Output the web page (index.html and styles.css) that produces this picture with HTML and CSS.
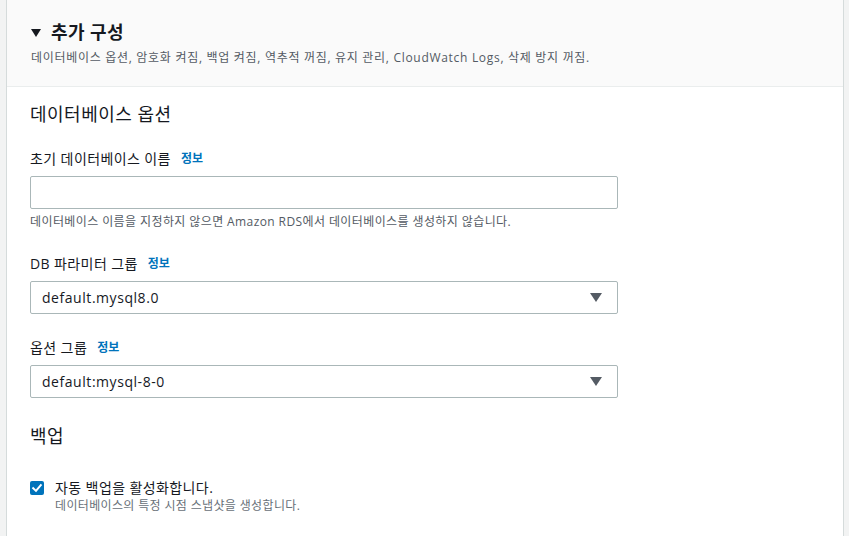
FILE: index.html
```html
<!DOCTYPE html>
<html lang="ko">
<head>
<meta charset="utf-8">
<link rel="stylesheet" href="styles.css">
</head>
<body>
<div class="panel">
  <div class="header">
    <div class="title-row">
      <span class="caret"></span>
      <h2 class="title">추가 구성</h2>
    </div>
    <p class="summary">데이터베이스 옵션, 암호화 켜짐, 백업 켜짐, 역추적 꺼짐, 유지 관리, CloudWatch Logs, 삭제 방지 꺼짐.</p>
  </div>
  <div class="body">
    <h3 class="section-title">데이터베이스 옵션</h3>

    <div class="field first">
      <div class="label">초기 데이터베이스 이름<a class="info">정보</a></div>
      <div class="input"></div>
      <div class="hint">데이터베이스 이름을 지정하지 않으면 Amazon RDS에서 데이터베이스를 생성하지 않습니다.</div>
    </div>

    <div class="field">
      <div class="label">DB 파라미터 그룹<a class="info">정보</a></div>
      <div class="input select"><span>default.mysql8.0</span><span class="arrow"></span></div>
    </div>

    <div class="field">
      <div class="label">옵션 그룹<a class="info">정보</a></div>
      <div class="input select"><span>default:mysql-8-0</span><span class="arrow"></span></div>
    </div>

    <h3 class="section-title backup">백업</h3>

    <div class="check-row">
      <span class="checkbox">
        <svg width="14" height="14" viewBox="0 0 14 14"><path d="M3.2 7.2 L6 9.9 L10.8 4.2" fill="none" stroke="#fff" stroke-width="2" stroke-linecap="square"/></svg>
      </span>
      <div class="check-text">
        <div class="check-label">자동 백업을 활성화합니다.</div>
        <div class="check-desc">데이터베이스의 특정 시점 스냅샷을 생성합니다.</div>
      </div>
    </div>
  </div>
</div>
</body>
</html>
```

FILE: styles.css
```css
* { box-sizing: border-box; }
html, body {
  margin: 0;
  padding: 0;
}
body {
  background: #f2f3f3;
  font-family: "Open Sans", "Noto Sans CJK KR", sans-serif;
  color: #16191f;
  height: 536px;
  overflow: hidden;
}
.panel {
  margin-left: 6px;
  width: 838px;
  height: 560px;
  background: #fff;
  border-left: 1px solid #d5dbdb;
  border-right: 1px solid #d5dbdb;
}
.header {
  background: #fafafa;
  border-bottom: 1px solid #eaeded;
  padding: 20px 23px 0 23px;
  height: 87px;
}
.title-row {
  display: flex;
  align-items: center;
  height: 24px;
}
.caret {
  width: 0;
  height: 0;
  border-left: 5px solid transparent;
  border-right: 5px solid transparent;
  border-top: 8px solid #16191f;
  margin-left: 1px;
  margin-right: 10px;
  margin-top: 1px;
}
.title {
  margin: 0;
  font-size: 18px;
  font-weight: 700;
  line-height: 24px;
  letter-spacing: 0.4px;
}
.summary {
  margin: 5px 0 0 0;
  padding-left: 1px;
  font-size: 12px;
  line-height: 18px;
  color: #545b64;
  letter-spacing: 0.7px;
}
.body {
  padding: 15px 23px 0 23px;
}
.section-title {
  margin: 0;
  font-size: 18px;
  font-weight: 400;
  line-height: 24px;
  letter-spacing: 0.5px;
}
.field { margin-top: 24px; }
.field.first { margin-top: 23px; }
.label {
  font-size: 14px;
  line-height: 20px;
  display: flex;
  align-items: center;
  letter-spacing: 0.4px;
}
.info {
  font-size: 12px;
  font-weight: 700;
  color: #0073bb;
  margin-left: 10px;
  letter-spacing: 0;
}
.input {
  margin-top: 7px;
  width: 588px;
  height: 33px;
  border: 1px solid #aab7b8;
  border-radius: 2px;
  background: #fff;
}
.select {
  display: flex;
  align-items: center;
  justify-content: space-between;
  padding: 0 15px 0 11px;
  font-size: 14px;
  letter-spacing: 0.55px;
}
.arrow {
  width: 0;
  height: 0;
  border-left: 6px solid transparent;
  border-right: 6px solid transparent;
  border-top: 9px solid #545b64;
}
.hint {
  margin-top: 5px;
  font-size: 12px;
  line-height: 16px;
  color: #545b64;
  letter-spacing: 0.4px;
}
.section-title.backup { margin-top: 26px; }
.check-row {
  margin-top: 30px;
  display: flex;
  align-items: flex-start;
}
.checkbox {
  width: 14px;
  height: 14px;
  background: #0073bb;
  border-radius: 2px;
  margin-top: 3px;
  display: flex;
}
.check-text { margin-left: 11px; }
.check-label {
  font-size: 14px;
  line-height: 20px;
  letter-spacing: 0.4px;
}
.check-desc {
  font-size: 12px;
  line-height: 16px;
  color: #687078;
  letter-spacing: 0.35px;
}
```
